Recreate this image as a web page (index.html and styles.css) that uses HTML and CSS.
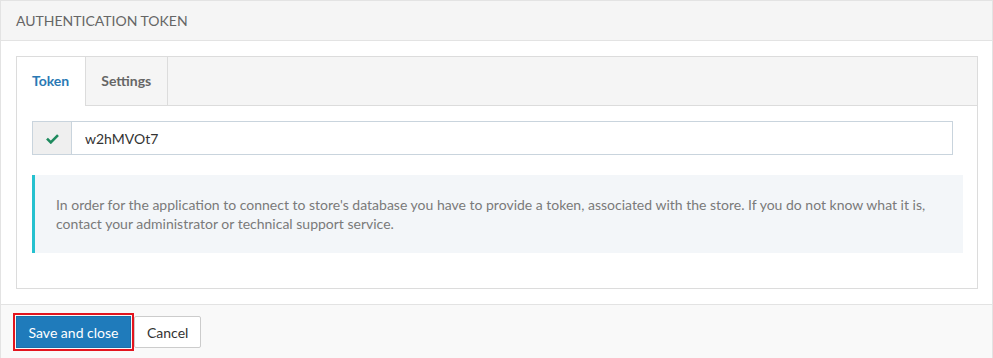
FILE: index.html
```html
<!DOCTYPE html>
<html lang="en">
<head>
  <meta charset="UTF-8">
  <title>Authentication token</title>
  <link rel="stylesheet" href="styles.css">
</head>
<body>

<div class="modal">
  <div class="modal-header">Authentication token</div>

  <div class="modal-body">
    <div class="panel">
      <div class="tabs">
        <a href="#" class="tab active">Token</a>
        <a href="#" class="tab">Settings</a>
      </div>
      <div class="panel-body">
        <div class="input-group">
          <span class="addon">
            <svg width="13" height="11" viewBox="0 0 13 11"><path d="M1 5.6 L4.8 9.4 L12 2.2" fill="none" stroke="#1e8a5e" stroke-width="2.6"/></svg>
          </span>
          <input type="text" value="w2hMVOt7">
        </div>
        <div class="info">
          In order for the application to connect to store's database you have to provide a token, associated with the store. If you do not know what it is, contact your administrator or technical support service.
        </div>
      </div>
    </div>
  </div>

  <div class="modal-footer">
    <button class="btn btn-primary">Save and close</button>
    <button class="btn">Cancel</button>
  </div>
</div>

</body>
</html>
```

FILE: styles.css
```css
body {
  margin: 0;
  font-family: Lato, "Open Sans", sans-serif;
  font-size: 14px;
  color: #333;
  background: #fff;
}

.modal {
  height: 358px;
  box-sizing: border-box;
  border: 1px solid #e3e3e3;
  border-bottom: none;
  display: flex;
  flex-direction: column;
}

/* Header */
.modal-header {
  height: 39px;
  line-height: 39px;
  padding: 0 15px;
  background: #f5f5f5;
  border-bottom: 1px solid #e3e3e3;
  text-transform: uppercase;
  color: #666;
}

.modal-body {
  padding: 15px 14px 15px 15px;
}

/* Tab panel */
.panel {
  border: 1px solid #dcdcdc;
}

.tabs {
  display: flex;
  background: #f5f5f5;
  border-bottom: 1px solid #dcdcdc;
  height: 48px;
}

.tab {
  display: block;
  padding: 0 16px 0 15px;
  line-height: 48px;
  font-weight: bold;
  color: #666;
  text-decoration: none;
  border-right: 1px solid #dcdcdc;
}

.tab.active {
  background: #fff;
  color: #2a79b4;
  height: 49px;
}

.panel-body {
  padding: 15px 14px 35px 15px;
}

.input-group {
  display: flex;
  height: 34px;
  margin-right: 10px;
  border: 1px solid #c9d4dd;
  box-sizing: border-box;
}

.addon {
  width: 38px;
  display: flex;
  align-items: center;
  justify-content: center;
  background: #efefef;
  border-right: 1px solid #c9d4dd;
}

.input-group input {
  flex: 1;
  border: none;
  outline: none;
  padding: 0 13px;
  font-family: inherit;
  font-size: 14px;
  color: #333;
}

.info {
  margin-top: 20px;
  padding: 20px 20px 20px 21px;
  line-height: 19px;
  background: #f3f6f9;
  border-left: 3px solid #25c1cf;
  color: #7a7a7a;
}

/* Footer */
.modal-footer {
  flex: 1;
  display: flex;
  align-items: flex-start;
  gap: 3px;
  padding: 11px 15px 0;
  background: #f9f9f9;
  border-top: 1px solid #e3e3e3;
}

.btn {
  height: 32px;
  padding: 0 12px;
  font-family: inherit;
  font-size: 14px;
  white-space: nowrap;
  color: #333;
  background: #fff;
  border: 1px solid #ccc;
  border-radius: 2px;
}

.btn-primary {
  width: 115px;
  padding: 0;
  color: #fff;
  background: #1f7bbb;
  border-color: #1a6fa9;
  border-radius: 0;
  outline: 2px solid #e3141e;
  outline-offset: 1px;
}
```
